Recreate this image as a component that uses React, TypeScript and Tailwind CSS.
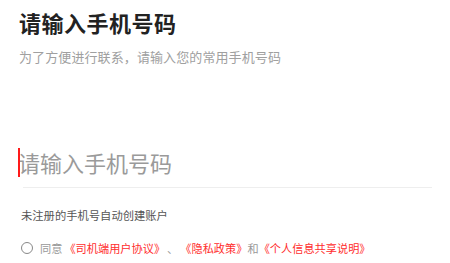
export default function App() {
  return (
    <div
      className="w-[450px] h-[263px] bg-white overflow-hidden pl-[19px] pr-[18px]"
      style={{ fontFamily: '"Noto Sans CJK SC", "Noto Sans", sans-serif' }}
    >
      <h1 className="mt-[7px] text-[22px] leading-[30px] font-bold text-[#222] tracking-[0.5px]">
        请输入手机号码
      </h1>
      <p className="mt-[11px] text-[13px] leading-[18px] text-[#a0a0a0] tracking-[0.1px]">
        为了方便进行联系，请输入您的常用手机号码
      </p>

      <div className="mt-[79px] ml-[4px] border-b border-[#eeeeee] h-[43px] relative flex items-center">
        <span className="absolute -left-[5px] top-[3px] w-[2px] h-[29px] bg-[#ff1a1a]" />
        <input
          className="w-full -ml-[5px] text-[22px] leading-[30px] text-[#333] placeholder:text-[#9a9a9a] outline-none bg-transparent pb-[8px]"
          placeholder="请输入手机号码"
        />
      </div>

      <p className="mt-[19px] ml-[2px] text-[11.3px] leading-[16px] text-[#555]">
        未注册的手机号自动创建账户
      </p>

      <div className="mt-[17px] ml-[2px] flex items-center text-[11.2px] leading-[16px]">
        <span className="w-[12px] h-[12px] rounded-full border border-[#888] mr-[7px]" />
        <span className="text-[#999]">同意</span>
        <span className="text-[#ff2d2d] ml-[2px]">《司机端用户协议》</span>
        <span className="text-[#999] mx-[2px]">、</span>
        <span className="text-[#ff2d2d]">《隐私政策》</span>
        <span className="text-[#999]">和</span>
        <span className="text-[#ff2d2d]">《个人信息共享说明》</span>
      </div>
    </div>
  );
}
